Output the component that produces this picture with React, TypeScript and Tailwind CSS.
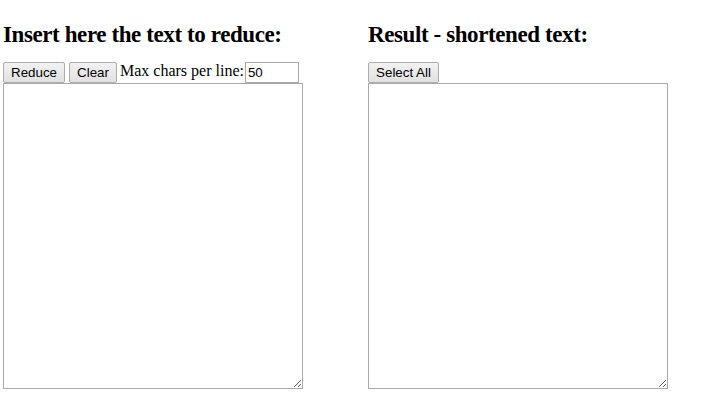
import React from "react";

const btn =
  "h-[21px] border border-[#acacac] rounded-[2px] bg-gradient-to-b from-[#f2f2f2] to-[#e1e1e1] font-['Liberation_Sans',Arial,sans-serif] text-[13.33px] leading-[19px] text-black text-center px-0";

export default function App() {
  return (
    <div className="flex pl-[3px] pt-[21px] font-['Liberation_Serif','Times_New_Roman',serif] text-black bg-white min-h-[403px]">
      <div className="w-[300px] shrink-0">
        <h2 className="text-[23px] tracking-[-0.4px] leading-[28px] font-bold whitespace-nowrap">Insert here the text to reduce:</h2>
        <div className="mt-[13px] flex items-start h-[21px]">
          <button className={`${btn} w-[62px]`}>Reduce</button>
          <button className={`${btn} w-[48px] ml-[4px]`}>Clear</button>
          <span className="ml-[3px] text-[16px] leading-[18px] whitespace-nowrap">Max chars per line:</span>
          <input
            defaultValue="50"
            className="ml-[1px] w-[54px] h-[21px] border border-[#a9a9a9] px-[2px] font-['Liberation_Sans',Arial,sans-serif] text-[13.33px] outline-none"
          />
        </div>
        <textarea className="block w-[300px] h-[306px] border border-[#a9a9a9] outline-none" />
      </div>
      <div className="ml-[65px] w-[300px] shrink-0">
        <h2 className="text-[23px] tracking-[-0.4px] leading-[28px] font-bold whitespace-nowrap">Result - shortened text:</h2>
        <div className="mt-[13px] flex items-start h-[21px]">
          <button className={`${btn} w-[71px]`}>Select All</button>
        </div>
        <textarea className="block w-[300px] h-[306px] border border-[#a9a9a9] outline-none" />
      </div>
    </div>
  );
}
